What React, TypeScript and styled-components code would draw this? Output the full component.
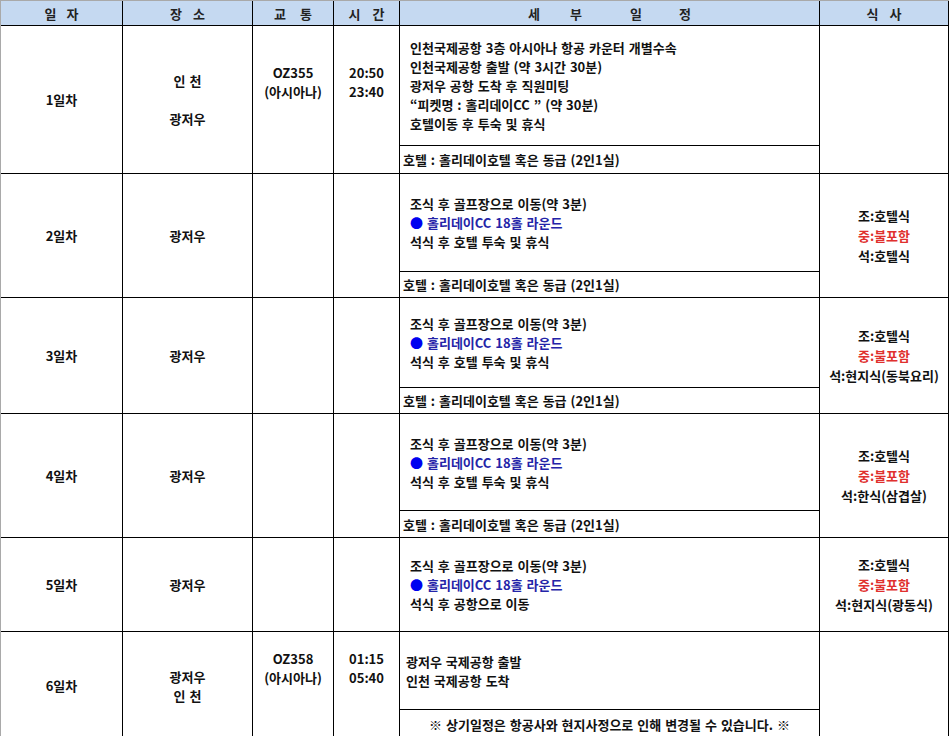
import React from "react";
import styled, { createGlobalStyle } from "styled-components";

const GlobalStyle = createGlobalStyle`
  html, body {
    margin: 0;
    padding: 0;
    background: #ffffff;
    overflow: hidden;
  }
  body {
    font-family: "Noto Sans CJK KR", "Noto Sans", sans-serif;
    font-weight: 700;
    font-size: 13px;
    word-spacing: 1px;
    color: #111111;
  }
`;

const COLS = "122px 130px 81px 66px 420px 129px";

const Sheet = styled.div`
  width: max-content;
  border-left: 1px solid #a9a9a9;
  border-top: 1px solid #a9a9a9;
`;

const GridRow = styled.div<{ $h: number }>`
  display: grid;
  grid-template-columns: ${COLS};
  height: ${(p) => p.$h}px;
`;

const HeaderCell = styled.div`
  box-sizing: border-box;
  background: #c5d9f1;
  border-right: 1px solid #000;
  border-bottom: 1px solid #000;
  display: flex;
  align-items: center;
  justify-content: center;
  color: #222;
  font-size: 13px;
`;

const HeaderChar = styled.span<{ $ml?: number }>`
  margin-left: ${(p) => p.$ml ?? 0}px;
`;

const Cell = styled.div<{ $shift?: number }>`
  box-sizing: border-box;
  border-right: 1px solid #000;
  border-bottom: 1px solid #000;
  display: flex;
  flex-direction: column;
  align-items: center;
  justify-content: center;
  text-align: center;
  line-height: 19px;
  padding-bottom: ${(p) => p.$shift ?? 0}px;
`;

const BlankLine = styled.div`
  height: 19px;
`;

const DetailCell = styled.div`
  box-sizing: border-box;
  border-right: 1px solid #000;
  border-bottom: 1px solid #000;
  display: flex;
  flex-direction: column;
`;

const DetailMain = styled.div<{ $pad: number }>`
  flex: 1;
  display: flex;
  flex-direction: column;
  justify-content: center;
  padding-left: ${(p) => p.$pad}px;
  line-height: 19px;
`;

const SubBar = styled.div<{ $h: number; $center?: boolean }>`
  box-sizing: border-box;
  height: ${(p) => p.$h}px;
  border-top: 1px solid #000;
  display: flex;
  align-items: center;
  justify-content: ${(p) => (p.$center ? "center" : "flex-start")};
  padding-left: ${(p) => (p.$center ? 0 : 3)}px;
`;

const RoundLine = styled.div`
  color: #2424a8;
`;

const Dot = styled.span`
  color: #0000f0;
`;

const MealCell = styled(Cell)`
  line-height: 20px;
`;

const MealLine = styled.div<{ $red?: boolean }>`
  color: ${(p) => (p.$red ? "#e0302e" : "#111")};
`;

type DetailLine = { text: string; round?: boolean };

type Day = {
  label: string;
  h: number;
  place: (string | null)[];
  transport?: string[];
  time?: string[];
  lines: DetailLine[];
  pad?: number;
  sub?: { text: string; h: number; center?: boolean };
  meals?: string[];
};

const HOTEL = "호텔 : 홀리데이호텔 혹은 동급 (2인1실)";
const GOLF = "조식 후 골프장으로 이동(약 3분)";
const ROUND = "홀리데이CC 18홀 라운드";

const days: Day[] = [
  {
    label: "1일차",
    h: 148,
    place: ["인 천", null, "광저우"],
    transport: ["OZ355", "(아시아나)"],
    time: ["20:50", "23:40"],
    lines: [
      { text: "인천국제공항 3층 아시아나 항공 카운터 개별수속" },
      { text: "인천국제공항 출발 (약 3시간 30분)" },
      { text: "광저우 공항 도착 후 직원미팅" },
      { text: "“피켓명 : 홀리데이CC ” (약 30분)" },
      { text: "호텔이동 후 투숙 및 휴식" },
    ],
    sub: { text: HOTEL, h: 28 },
  },
  {
    label: "2일차",
    h: 124,
    place: ["광저우"],
    lines: [{ text: "조식 후 골프장으로 이동(약 3분)" }, { text: ROUND, round: true }, { text: "석식 후 호텔 투숙 및 휴식" }],
    sub: { text: HOTEL, h: 26 },
    meals: ["조:호텔식", "중:불포함", "석:호텔식"],
  },
  {
    label: "3일차",
    h: 116,
    place: ["광저우"],
    lines: [{ text: GOLF }, { text: ROUND, round: true }, { text: "석식 후 호텔 투숙 및 휴식" }],
    sub: { text: HOTEL, h: 26 },
    meals: ["조:호텔식", "중:불포함", "석:현지식(동북요리)"],
  },
  {
    label: "4일차",
    h: 124,
    place: ["광저우"],
    lines: [{ text: GOLF }, { text: ROUND, round: true }, { text: "석식 후 호텔 투숙 및 휴식" }],
    sub: { text: HOTEL, h: 27 },
    meals: ["조:호텔식", "중:불포함", "석:한식(삼겹살)"],
  },
  {
    label: "5일차",
    h: 94,
    place: ["광저우"],
    lines: [{ text: GOLF }, { text: ROUND, round: true }, { text: "석식 후 공항으로 이동" }],
    meals: ["조:호텔식", "중:불포함", "석:현지식(광동식)"],
  },
  {
    label: "6일차",
    h: 108,
    place: ["광저우", "인 천"],
    transport: ["OZ358", "(아시아나)"],
    time: ["01:15", "05:40"],
    lines: [{ text: "광저우 국제공항 출발" }, { text: "인천 국제공항 도착" }],
    pad: 6,
    sub: { text: "※ 상기일정은 항공사와 현지사정으로 인해 변경될 수 있습니다. ※", h: 30, center: true },
  },
];

const Lines: React.FC<{ items?: (string | null)[] }> = ({ items }) => (
  <>
    {(items ?? []).map((t, i) => (t === null ? <BlankLine key={i} /> : <div key={i}>{t}</div>))}
  </>
);

const DayRow: React.FC<{ d: Day }> = ({ d }) => (
  <GridRow $h={d.h}>
    <Cell>{d.label}</Cell>
    <Cell>
      <Lines items={d.place} />
    </Cell>
    <Cell $shift={d.transport ? 36 : 0}>
      <Lines items={d.transport} />
    </Cell>
    <Cell $shift={d.time ? 36 : 0}>
      <Lines items={d.time} />
    </Cell>
    <DetailCell>
      <DetailMain $pad={d.pad ?? 10}>
        {d.lines.map((l, i) =>
          l.round ? (
            <RoundLine key={i}>
              <Dot>●</Dot> {l.text}
            </RoundLine>
          ) : (
            <div key={i}>{l.text}</div>
          )
        )}
      </DetailMain>
      {d.sub && (
        <SubBar $h={d.sub.h} $center={d.sub.center}>
          {d.sub.text}
        </SubBar>
      )}
    </DetailCell>
    <MealCell>
      {(d.meals ?? []).map((m, i) => (
        <MealLine key={i} $red={m.startsWith("중")}>
          {m}
        </MealLine>
      ))}
    </MealCell>
  </GridRow>
);

const HeaderLabel: React.FC<{ chars: string[]; gaps: number[] }> = ({ chars, gaps }) => (
  <HeaderCell>
    {chars.map((c, i) => (
      <HeaderChar key={i} $ml={i === 0 ? 0 : gaps[i - 1]}>
        {c}
      </HeaderChar>
    ))}
  </HeaderCell>
);

export default function App() {
  return (
    <>
      <GlobalStyle />
      <Sheet>
        <GridRow $h={25}>
          <HeaderLabel chars={["일", "자"]} gaps={[10]} />
          <HeaderLabel chars={["장", "소"]} gaps={[11]} />
          <HeaderLabel chars={["교", "통"]} gaps={[14]} />
          <HeaderLabel chars={["시", "간"]} gaps={[12]} />
          <HeaderLabel chars={["세", "부", "일", "정"]} gaps={[30, 48, 37]} />
          <HeaderLabel chars={["식", "사"]} gaps={[11]} />
        </GridRow>
        {days.map((d) => (
          <DayRow key={d.label} d={d} />
        ))}
      </Sheet>
    </>
  );
}
